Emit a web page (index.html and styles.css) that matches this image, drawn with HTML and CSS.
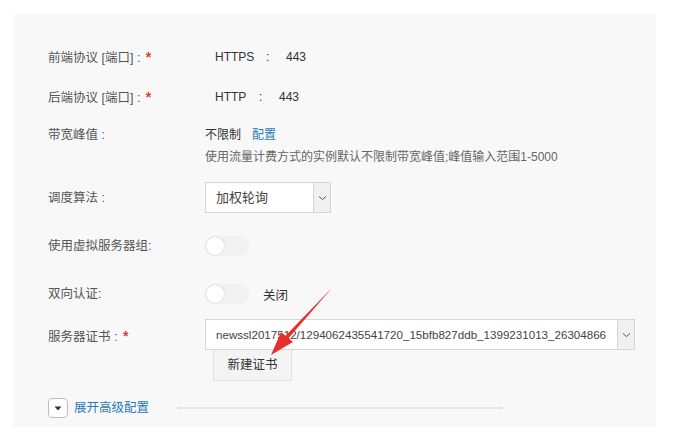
FILE: index.html
```html
<!DOCTYPE html>
<html lang="zh">
<head>
<meta charset="utf-8">
<link rel="stylesheet" href="styles.css">
</head>
<body>
<div class="panel">
  <div class="row r1">
    <div class="label">前端协议 [端口] : <span class="req">*</span></div>
    <div class="value proto"><span class="p1">HTTPS</span><span class="colon">:</span><span>443</span></div>
  </div>
  <div class="row r2">
    <div class="label">后端协议 [端口] : <span class="req">*</span></div>
    <div class="value proto"><span class="p2">HTTP</span><span class="colon">:</span><span>443</span></div>
  </div>
  <div class="row r3 top">
    <div class="label">带宽峰值 :</div>
    <div class="value">
      <div class="line">不限制<a class="link cfg">配置</a></div>
      <div class="line help">使用流量计费方式的实例默认不限制带宽峰值;峰值输入范围1-5000</div>
    </div>
  </div>
  <div class="row r4">
    <div class="label">调度算法 :</div>
    <div class="select sel-short"><span class="sel-text">加权轮询</span><span class="sel-arrow"><svg width="9" height="6" viewBox="0 0 9 6"><path d="M1 1.5 L4.5 4.5 L8 1.5" fill="none" stroke="#555" stroke-width="1"/></svg></span></div>
  </div>
  <div class="row r5">
    <div class="label">使用虚拟服务器组:</div>
    <div class="toggle"><span class="knob"></span></div>
  </div>
  <div class="row r6">
    <div class="label">双向认证:</div>
    <div class="toggle"><span class="knob"></span></div>
    <span class="state">关闭</span>
  </div>
  <div class="row r7">
    <div class="label">服务器证书 : <span class="req big">*</span></div>
    <div class="cert-col">
      <div class="select sel-long"><span class="sel-text latin">newssl2017512/1294062435541720_15bfb827ddb_1399231013_26304866</span><span class="sel-arrow"><svg width="9" height="6" viewBox="0 0 9 6"><path d="M1 1.5 L4.5 4.5 L8 1.5" fill="none" stroke="#555" stroke-width="1"/></svg></span></div>
      <div class="btn">新建证书</div>
    </div>
  </div>
  <div class="row r8">
    <span class="exp-icon"><svg width="8" height="5" viewBox="0 0 8 5"><path d="M0.5 0.5 L7.5 0.5 L4 4.5 Z" fill="#333"/></svg></span>
    <a class="link exp">展开高级配置</a>
    <span class="divider"></span>
  </div>
</div>
<svg class="arrow" width="677" height="441" viewBox="0 0 677 441">
  <polygon points="330.6,289.4 329.4,290.6 285.5,335.7 281,332 271,355 293,342 288.5,338.3" fill="#e8302a"/>
</svg>
</body>
</html>
```
FILE: styles.css
```css
html, body {
  margin: 0;
  padding: 0;
  background: #ffffff;
}
body {
  width: 677px;
  height: 441px;
  overflow: hidden;
  position: relative;
  font-family: "Liberation Sans", "Noto Sans CJK SC", sans-serif;
  font-size: 12px;
  color: #333;
}
.panel {
  margin: 14px 0 0 14px;
  width: 642px;
  height: 413px;
  background: #f8f8f8;
  padding: 23px 0 0 34px;
  box-sizing: border-box;
}
.row {
  display: flex;
  align-items: center;
}
.row.top {
  align-items: flex-start;
}
.label {
  width: 157px;
  flex: none;
  color: #555;
  line-height: 20px;
  font-size: 12.5px;
}
.req {
  color: #e4393c;
  font-weight: bold;
  font-size: 14px;
  margin-left: 2px;
}
.r1, .r2 {
  height: 40px;
}
.proto {
  padding-left: 10px;
  line-height: 20px;
  color: #333;
  display: flex;
}
.p1 { width: 51px; }
.p2 { width: 44px; }
.colon { width: 20px; }
.r3 {
  margin-top: 8px;
}
.line {
  line-height: 20px;
}
.help {
  margin-top: 2px;
  color: #666;
}
.link {
  color: #2a78b8;
}
.cfg {
  margin-left: 11px;
}
.r4 {
  margin-top: 15px;
}
.select {
  display: flex;
  height: 31px;
  background: #fff;
  border: 1px solid #d6d6d6;
  box-sizing: border-box;
}
.sel-short { width: 126px; }
.sel-long { width: 430px; }
.sel-text {
  flex: 1;
  padding-left: 10px;
  line-height: 29px;
  font-size: 13px;
  color: #444;
  white-space: nowrap;
  overflow: hidden;
}
.sel-text.latin {
  font-size: 11.6px;
}
.sel-arrow {
  width: 16px;
  flex: none;
  background: #f0f0f0;
  border-left: 1px solid #d6d6d6;
  display: flex;
  align-items: center;
  justify-content: center;
}
.r5 {
  margin-top: 23px;
}
.toggle {
  width: 45px;
  height: 20px;
  border-radius: 10px;
  background: #f2f2f2;
  position: relative;
  flex: none;
}
.knob {
  position: absolute;
  left: 1px;
  top: 1px;
  width: 18px;
  height: 18px;
  border-radius: 50%;
  background: #fff;
  box-shadow: 0 0 2px rgba(0, 0, 0, 0.2);
}
.state {
  margin-left: 13px;
  color: #333;
  font-size: 12.5px;
}
.r6 {
  margin-top: 28px;
}
.r7 {
  margin-top: 15px;
  align-items: flex-start;
}
.r7 .label {
  line-height: 31px;
  padding-top: 2px;
}
.cert-col {
  display: flex;
  flex-direction: column;
}
.btn {
  margin-left: 8px;
  width: 79px;
  height: 31px;
  box-sizing: border-box;
  background: #f4f4f4;
  border: 1px solid #e0e0e0;
  border-top: none;
  text-align: center;
  line-height: 30px;
  color: #333;
  font-size: 12.5px;
}
.r8 {
  margin-top: 17px;
}
.exp-icon {
  width: 20px;
  height: 20px;
  box-sizing: border-box;
  border: 1px solid #bcbcbc;
  border-radius: 4px;
  background: #fff;
  display: flex;
  align-items: center;
  justify-content: center;
}
.exp {
  margin-left: 6px;
  line-height: 20px;
  font-size: 12.5px;
}
.divider {
  margin-left: 28px;
  width: 326px;
  height: 2px;
  background: #e6e6e6;
}
.arrow {
  position: absolute;
  left: 0;
  top: 0;
  pointer-events: none;
}
```
